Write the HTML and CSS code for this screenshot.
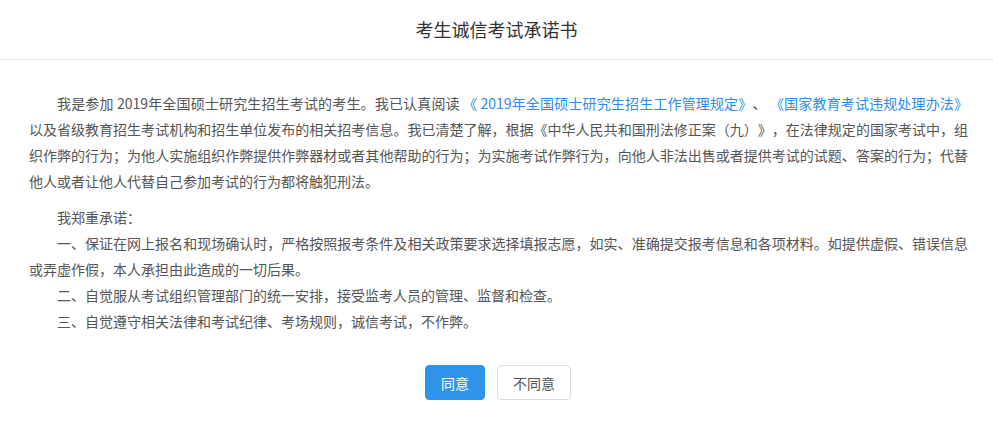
FILE: index.html
```html
<!DOCTYPE html>
<html lang="zh-CN">
<head>
  <meta charset="UTF-8" />
  <title>考生诚信考试承诺书</title>
  <link rel="stylesheet" href="styles.css">
</head>
<body>

  <div class="dialog">
    <header class="dialog-head">考生诚信考试承诺书</header>

    <div class="dialog-body">
      <p class="indent">我是参加 2019年全国硕士研究生招生考试的考生。我已认真阅读 <a href="#">《 2019年全国硕士研究生招生工作管理规定》</a>、 <a href="#">《国家教育考试违规处理办法》</a>以及省级教育招生考试机构和招生单位发布的相关招考信息。我已清楚了解，根据《中华人民共和国刑法修正案（九）》，在法律规定的国家考试中，组织作弊的行为；为他人实施组织作弊提供作弊器材或者其他帮助的行为；为实施考试作弊行为，向他人非法出售或者提供考试的试题、答案的行为；代替他人或者让他人代替自己参加考试的行为都将触犯刑法。</p>

      <div class="promise">
        <p class="indent">我郑重承诺：</p>
        <p class="indent">一、保证在网上报名和现场确认时，严格按照报考条件及相关政策要求选择填报志愿，如实、准确提交报考信息和各项材料。如提供虚假、错误信息或弄虚作假，本人承担由此造成的一切后果。</p>
        <p class="indent">二、自觉服从考试组织管理部门的统一安排，接受监考人员的管理、监督和检查。</p>
        <p class="indent">三、自觉遵守相关法律和考试纪律、考场规则，诚信考试，不作弊。</p>
      </div>
    </div>

    <div class="dialog-foot">
      <button class="btn btn-primary" onclick="agree(true)">同意</button>
      <button class="btn" onclick="agree(false)">不同意</button>
    </div>
  </div>

  <script>
    function agree(ok) {
      // 提交前的确认，接口另行处理
      console.log(ok ? 'agree' : 'disagree');
    }
  </script>

</body>
</html>
```

FILE: styles.css
```css
* { box-sizing: border-box; margin: 0; padding: 0; }
body {
  background: #fff;
  font-family: "Microsoft YaHei", "Noto Sans CJK SC", sans-serif;
  color: #555;
  font-size: 14px;
}
.dialog-head {
  height: 60px;
  line-height: 59px;
  text-align: center;
  font-size: 18px;
  color: #333;
  border-bottom: 1px solid #e8e8e8;
}
.dialog-body {
  padding: 30px 25px 0 29px;
  line-height: 26px;
  text-align: justify;
  text-spacing-trim: space-all;
}
.indent {
  text-indent: 2em;
}
.dialog-body a {
  color: #2d8cf0;
  text-decoration: none;
}
.promise {
  margin-top: 10px;
}
.dialog-foot {
  display: flex;
  justify-content: center;
  gap: 12px;
  padding: 31px 0 0 3px;
}
.btn {
  height: 35px;
  padding: 0 15px;
  font-family: inherit;
  font-size: 14px;
  color: #555;
  background: #fff;
  border: 1px solid #dcdcdc;
  border-radius: 4px;
  cursor: pointer;
}
.btn-primary {
  background: #2d94e8;
  border-color: #2d94e8;
  color: #fff;
}
```
